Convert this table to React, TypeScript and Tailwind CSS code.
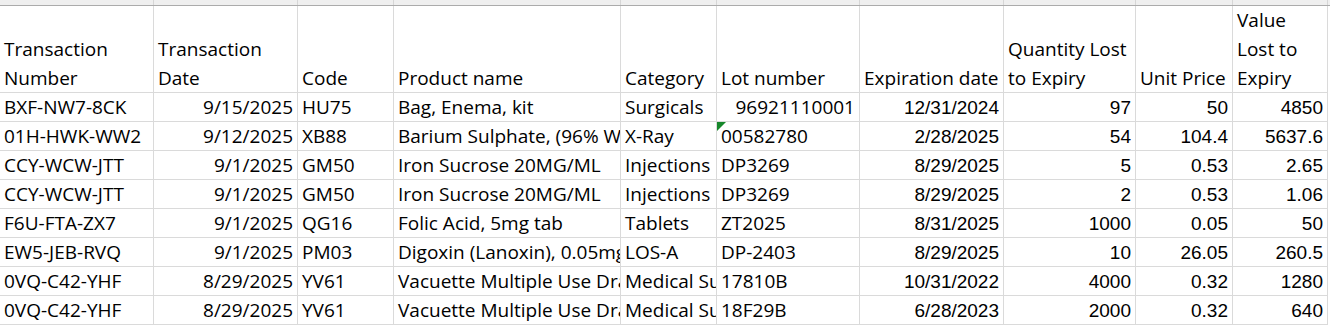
import React from 'react';

type Row = {
  txn: string;
  date: string;
  code: string;
  product: string;
  category: string;
  lot: string;
  lotIsNumber?: boolean;
  lotFlag?: boolean;
  expiry: string;
  qty: string;
  price: string;
  value: string;
};

const rows: Row[] = [
  { txn: 'BXF-NW7-8CK', date: '9/15/2025', code: 'HU75', product: 'Bag, Enema, kit', category: 'Surgicals', lot: '96921110001', lotIsNumber: true, expiry: '12/31/2024', qty: '97', price: '50', value: '4850' },
  { txn: '01H-HWK-WW2', date: '9/12/2025', code: 'XB88', product: 'Barium Sulphate, (96% W/W) powder', category: 'X-Ray', lot: '00582780', lotFlag: true, expiry: '2/28/2025', qty: '54', price: '104.4', value: '5637.6' },
  { txn: 'CCY-WCW-JTT', date: '9/1/2025', code: 'GM50', product: 'Iron Sucrose 20MG/ML', category: 'Injections', lot: 'DP3269', expiry: '8/29/2025', qty: '5', price: '0.53', value: '2.65' },
  { txn: 'CCY-WCW-JTT', date: '9/1/2025', code: 'GM50', product: 'Iron Sucrose 20MG/ML', category: 'Injections', lot: 'DP3269', expiry: '8/29/2025', qty: '2', price: '0.53', value: '1.06' },
  { txn: 'F6U-FTA-ZX7', date: '9/1/2025', code: 'QG16', product: 'Folic Acid, 5mg tab', category: 'Tablets', lot: 'ZT2025', expiry: '8/31/2025', qty: '1000', price: '0.05', value: '50' },
  { txn: 'EW5-JEB-RVQ', date: '9/1/2025', code: 'PM03', product: 'Digoxin (Lanoxin), 0.05mg tab', category: 'LOS-A', lot: 'DP-2403', expiry: '8/29/2025', qty: '10', price: '26.05', value: '260.5' },
  { txn: '0VQ-C42-YHF', date: '8/29/2025', code: 'YV61', product: 'Vacuette Multiple Use Drawing Needle', category: 'Medical Supplies', lot: '17810B', expiry: '10/31/2022', qty: '4000', price: '0.32', value: '1280' },
  { txn: '0VQ-C42-YHF', date: '8/29/2025', code: 'YV61', product: 'Vacuette Multiple Use Drawing Needle', category: 'Medical Supplies', lot: '18F29B', expiry: '6/28/2023', qty: '2000', price: '0.32', value: '640' },
];

const cols = 'grid grid-cols-[154px_144px_96px_227px_96px_143px_144px_132px_97px_95px]';

// Excel-like cell: text clipped at the grid line
const Cell = ({ children, right, num, className = '' }: { children?: React.ReactNode; right?: boolean; num?: boolean; className?: string }) => (
  <div
    className={`relative h-[29px] overflow-hidden whitespace-nowrap border-r border-b border-[#dadada] px-[4px] ${
      right ? 'text-right' : 'text-left'
    } ${num ? "font-['Liberation_Sans',Arial,sans-serif] leading-[30px]" : 'leading-[28px]'} ${className}`}
  >
    {children}
  </div>
);

const Head = ({ lines }: { lines: string[] }) => (
  <div className="flex h-[87px] flex-col justify-end border-r border-b border-[#dadada] px-[4px]">
    {lines.map((l) => (
      <div key={l} className="translate-y-[1px] whitespace-nowrap leading-[29px]">
        {l}
      </div>
    ))}
  </div>
);

export default function App() {
  const headers = [
    ['Transaction', 'Number'],
    ['Transaction', 'Date'],
    ['Code'],
    ['Product name'],
    ['Category'],
    ['Lot number'],
    ['Expiration date'],
    ['Quantity Lost', 'to Expiry'],
    ['Unit Price'],
    ['Value', 'Lost to', 'Expiry'],
  ];

  return (
    <div className="h-[325px] w-[1330px] overflow-hidden bg-white font-['Open_Sans',sans-serif] text-[19px] text-black">
      {/* column header strip, scrolled out of view */}
      <div className={`${cols} h-[6px] border-b border-[#ababab] bg-[#efefef]`}>
        {headers.map((_, i) => (
          <div key={i} className="border-r border-[#d6d6d6]" />
        ))}
      </div>

      <div className={cols}>
        {headers.map((h, i) => (
          <Head key={i} lines={h} />
        ))}

        {rows.map((r, i) => (
          <React.Fragment key={i}>
            <Cell>{r.txn}</Cell>
            <Cell right>{r.date}</Cell>
            <Cell>{r.code}</Cell>
            <Cell>{r.product}</Cell>
            <Cell>{r.category}</Cell>
            <Cell right={r.lotIsNumber}>
              {r.lotFlag && (
                <svg className="absolute left-0 top-0" width="9" height="9" viewBox="0 0 9 9">
                  <path d="M0 0H9L0 9Z" fill="#16872b" />
                </svg>
              )}
              {r.lot}
            </Cell>
            <Cell right num>{r.expiry}</Cell>
            <Cell right num>{r.qty}</Cell>
            <Cell right num>{r.price}</Cell>
            <Cell right num>{r.value}</Cell>
          </React.Fragment>
        ))}
      </div>
    </div>
  );
}
